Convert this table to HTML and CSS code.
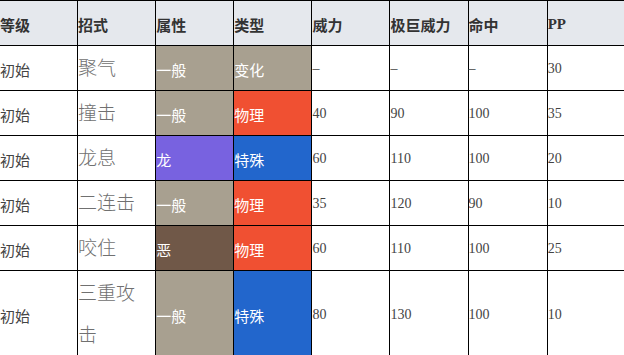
FILE: index.html
```html
<!DOCTYPE html>
<html lang="zh">
<head>
<meta charset="utf-8">
<link rel="stylesheet" href="styles.css">
</head>
<body>
<table class="moves">
  <colgroup>
    <col class="c-std"><col class="c-std"><col class="c-std"><col class="c-std">
    <col class="c-std"><col class="c-std"><col class="c-wide"><col class="c-last">
  </colgroup>
  <thead>
    <tr>
      <th>等级</th><th>招式</th><th>属性</th><th>类型</th>
      <th>威力</th><th>极巨威力</th><th>命中</th><th>PP</th>
    </tr>
  </thead>
  <tbody>
    <tr>
      <td>初始</td><td><a class="move">聚气</a></td>
      <td class="t-normal">一般</td><td class="t-normal">变化</td>
      <td>–</td><td>–</td><td>–</td><td>30</td>
    </tr>
    <tr>
      <td>初始</td><td><a class="move">撞击</a></td>
      <td class="t-normal">一般</td><td class="t-physical">物理</td>
      <td>40</td><td>90</td><td>100</td><td>35</td>
    </tr>
    <tr>
      <td>初始</td><td><a class="move">龙息</a></td>
      <td class="t-dragon">龙</td><td class="t-special">特殊</td>
      <td>60</td><td>110</td><td>100</td><td>20</td>
    </tr>
    <tr>
      <td>初始</td><td><a class="move">二连击</a></td>
      <td class="t-normal">一般</td><td class="t-physical">物理</td>
      <td>35</td><td>120</td><td>90</td><td>10</td>
    </tr>
    <tr>
      <td>初始</td><td><a class="move">咬住</a></td>
      <td class="t-dark">恶</td><td class="t-physical">物理</td>
      <td>60</td><td>110</td><td>100</td><td>25</td>
    </tr>
    <tr>
      <td>初始</td><td><a class="move">三重攻击</a></td>
      <td class="t-normal">一般</td><td class="t-special">特殊</td>
      <td>80</td><td>130</td><td>100</td><td>10</td>
    </tr>
  </tbody>
</table>
</body>
</html>
```
FILE: styles.css
```css
html, body {
  margin: 0;
  padding: 0;
  background: #ffffff;
  overflow: hidden;
}

.moves {
  border-collapse: collapse;
  table-layout: fixed;
  width: 640px;
  margin-left: -1px;
  font-family: "Liberation Serif", "Noto Sans CJK SC", serif;
  font-size: 14px;
  color: #444;
}

.c-std { width: 77px; }
.c-wide { width: 78px; }
.c-last { width: 90px; }

.moves th,
.moves td {
  border: 1px solid #000;
  padding: 2px 0 0 0;
  height: 42px;
  text-align: left;
  vertical-align: middle;
}

.moves th {
  background: #e5e8ed;
  color: #333;
  font-weight: bold;
  font-size: 15px;
}

.moves td:first-child {
  font-size: 15px;
}

.move {
  display: block;
  font-size: 19px;
  font-weight: 300;
  line-height: 42px;
  color: #707070;
  padding-right: 4px;
}

.t-normal,
.t-physical,
.t-special,
.t-dragon,
.t-dark {
  color: #fff;
  font-size: 15px;
}

.t-normal { background: #a8a090; }
.t-physical { background: #f05032; }
.t-special { background: #2266cc; }
.t-dragon { background: #7862e0; }
.t-dark { background: #705848; }
```
